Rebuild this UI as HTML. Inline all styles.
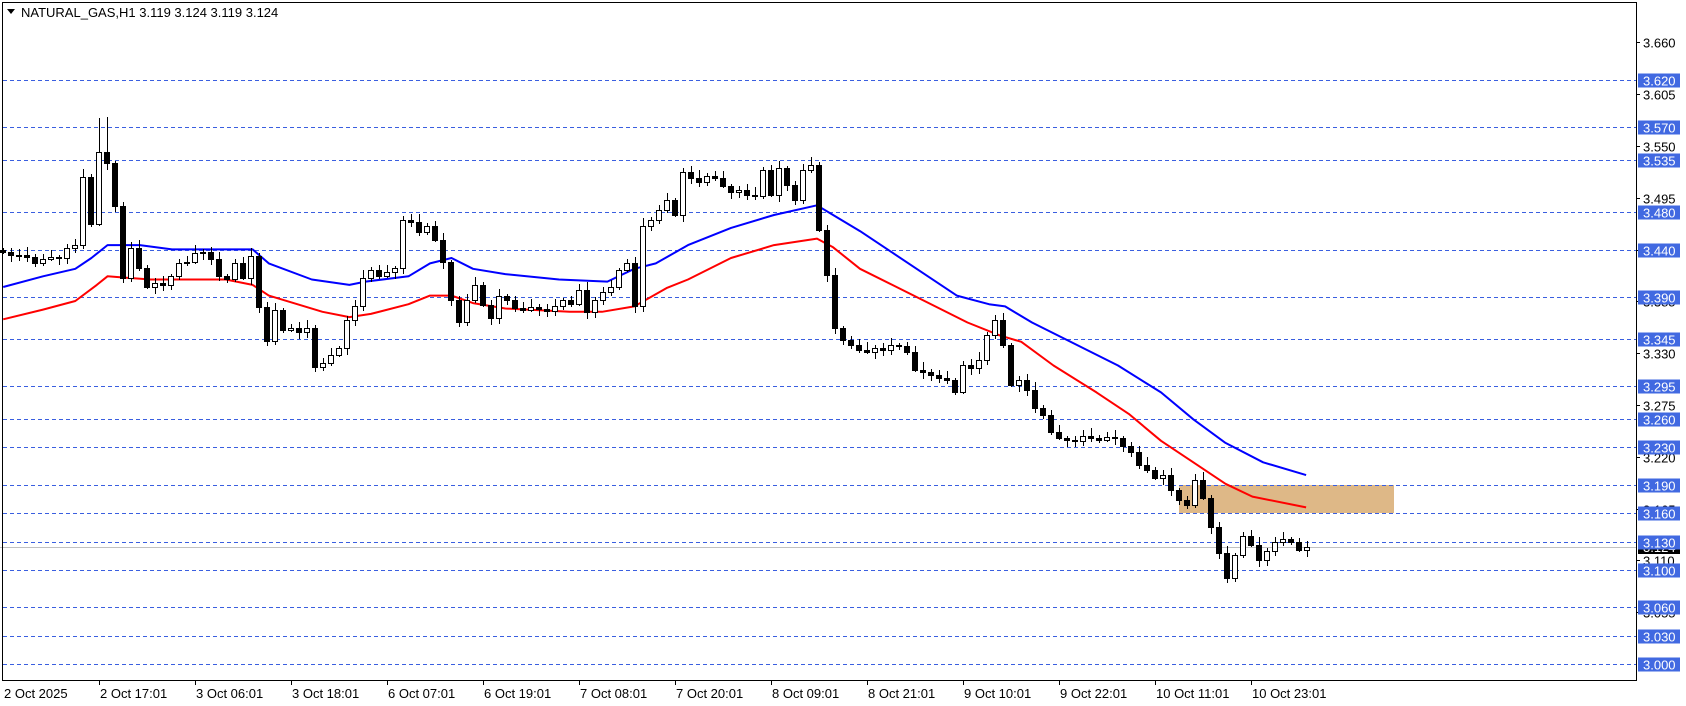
<!DOCTYPE html>
<html><head><meta charset="utf-8"><style>
html,body{margin:0;padding:0;background:#fff;width:1686px;height:706px;overflow:hidden;font-family:"Liberation Sans",Tahoma,sans-serif;}
</style></head><body>
<svg id="c" width="1686" height="706" xmlns="http://www.w3.org/2000/svg" style="position:absolute;left:0;top:0;font-family:'Liberation Sans',sans-serif;font-size:13px">
<rect x="0" y="0" width="1686" height="706" fill="#fff"/>
<rect x="1179" y="485" width="215" height="28" fill="#DEB887"/>
<g id="grid"></g>
<line x1="0" y1="547.5" x2="1636" y2="547.5" stroke="#c0c0c0" stroke-width="1"/>
<g id="ma" fill="none" stroke-width="2" stroke-linejoin="round"></g>
<g id="cd"></g>
<line x1="2.5" y1="2" x2="2.5" y2="680" stroke="#000"/>
<line x1="2" y1="2.5" x2="1636" y2="2.5" stroke="#000"/>
<line x1="1636.5" y1="2" x2="1636.5" y2="681" stroke="#000"/>
<line x1="2" y1="680.5" x2="1637" y2="680.5" stroke="#000"/>
<g id="ax"></g>
<polygon points="7,9 15,9 11,14" fill="#000"/>
<text x="21" y="17" fill="#000">NATURAL_GAS,H1  3.119 3.124 3.119 3.124</text>
</svg>
<script>
var NS="http://www.w3.org/2000/svg";
function el(p,t,a,txt){var e=document.createElementNS(NS,t);for(var k in a)e.setAttribute(k,a[k]);if(txt!==undefined)e.textContent=txt;document.getElementById(p).appendChild(e);return e;}
function Y(p){return 80+(3.620-p)*941.9;}
var tk=[3.660,3.605,3.550,3.495,3.440,3.385,3.330,3.275,3.220,3.165,3.110,3.055];
tk.forEach(function(p){var y=Math.round(Y(p))+0.5;el("ax","line",{x1:1636,y1:y,x2:1640,y2:y,stroke:"#000"});el("ax","text",{x:1643,y:y+5,fill:"#000"},p.toFixed(3));});
el("ax","rect",{x:1638,y:541,width:42,height:13,fill:"#000"});
el("ax","text",{x:1643,y:552,fill:"#fff"},"3.124");
var lv=[3.620,3.570,3.535,3.480,3.440,3.390,3.345,3.295,3.260,3.230,3.190,3.160,3.130,3.100,3.060,3.030,3.000];
lv.forEach(function(p){var y=Math.round(Y(p))+0.5;
el("grid","line",{x1:3,y1:y,x2:1636,y2:y,stroke:"#3A5FE0","stroke-dasharray":"4,3","stroke-width":1});
el("ax","rect",{x:1638,y:y-7,width:42,height:14,fill:"#4169E1"});
el("ax","text",{x:1643,y:y+5,fill:"#fff"},p.toFixed(3));});
var d=["2 Oct 2025","2 Oct 17:01","3 Oct 06:01","3 Oct 18:01","6 Oct 07:01","6 Oct 19:01","7 Oct 08:01","7 Oct 20:01","8 Oct 09:01","8 Oct 21:01","9 Oct 10:01","9 Oct 22:01","10 Oct 11:01","10 Oct 23:01"];
d.forEach(function(s,i){var x=i==0?3:99+96*(i-1);if(i>0)el("ax","line",{x1:x+.5,y1:680,x2:x+.5,y2:685,stroke:"#000"});el("ax","text",{x:i==0?4:x+1,y:698,fill:"#000"},s);});
var c=[252,255,255,257,263,259,257,258,248,245,177,224,152,163,206,278,248,268,287,283,285,276,263,262,253,252,259,276,279,263,278,256,307,341,310,330,328,332,328,367,363,355,348,320,306,278,270,276,272,268,220,222,232,226,240,262,300,322,300,285,305,318,296,300,308,310,307,309,311,306,300,304,290,312,300,292,287,270,263,306,226,220,210,200,215,172,178,182,176,178,186,192,190,195,196,170,195,168,185,200,170,165,230,275,328,340,345,350,352,348,350,345,346,352,370,372,375,378,380,392,365,368,360,335,320,345,385,380,390,408,415,432,438,440,441,436,438,440,437,438,446,452,465,470,478,475,490,500,505,480,498,527,553,578,555,536,545,560,551,542,539,542,550,547];
var prev=250;
for(var i=0;i<c.length;i++){var o=prev,cl=c[i];var x=3+8*i;var r=((i*37)%7);
var hi=Math.min(o,cl)-2-r,lo=Math.max(o,cl)+2+((i*53)%6);
if(i==12)hi=118;if(i==13)hi=117;
el("cd","line",{x1:x+.5,y1:hi,x2:x+.5,y2:lo,stroke:"#000"});
var t=Math.min(o,cl),h=Math.max(Math.abs(o-cl),1);
if(cl<o)el("cd","rect",{x:x-2.5,y:t+.5,width:5,height:h,fill:"#fff",stroke:"#000"});
else el("cd","rect",{x:x-3,y:t,width:6,height:h+1,fill:"#000"});
prev=cl;}
function pl(pts,col){var s=pts.map(function(p){return (p[0]*1.075).toFixed(1)+","+(p[1]*1.075).toFixed(1)}).join(" ");el("ma","polyline",{points:s,stroke:col});}
pl([[3,267],[40,257],[70,250],[85,240],[100,228],[130,228],[160,232],[235,232],[250,245],[290,260],[325,265],[340,262],[380,257],[400,245],[420,240],[440,250],[470,255],[520,260],[565,262],[590,250],[610,245],[640,228],[680,212],[720,200],[760,191],[775,200],[800,215],[830,235],[860,255],[890,275],[920,283],[935,285],[960,300],[1000,320],[1040,340],[1080,365],[1110,390],[1140,412],[1175,430],[1215,442]],"#0000FF");
pl([[3,297],[40,288],[70,280],[90,265],[100,257],[140,260],[210,260],[235,265],[250,275],[300,290],[325,295],[345,292],[380,283],[400,275],[420,275],[440,282],[470,287],[530,290],[560,290],[590,285],[620,268],[640,260],[680,240],[720,228],[760,222],[775,230],[800,250],[830,265],[870,285],[900,300],[930,312],[950,318],[980,340],[1020,365],[1050,385],[1080,410],[1110,430],[1140,450],[1165,462],[1215,472]],"#FF0000");
</script>
</body></html>
